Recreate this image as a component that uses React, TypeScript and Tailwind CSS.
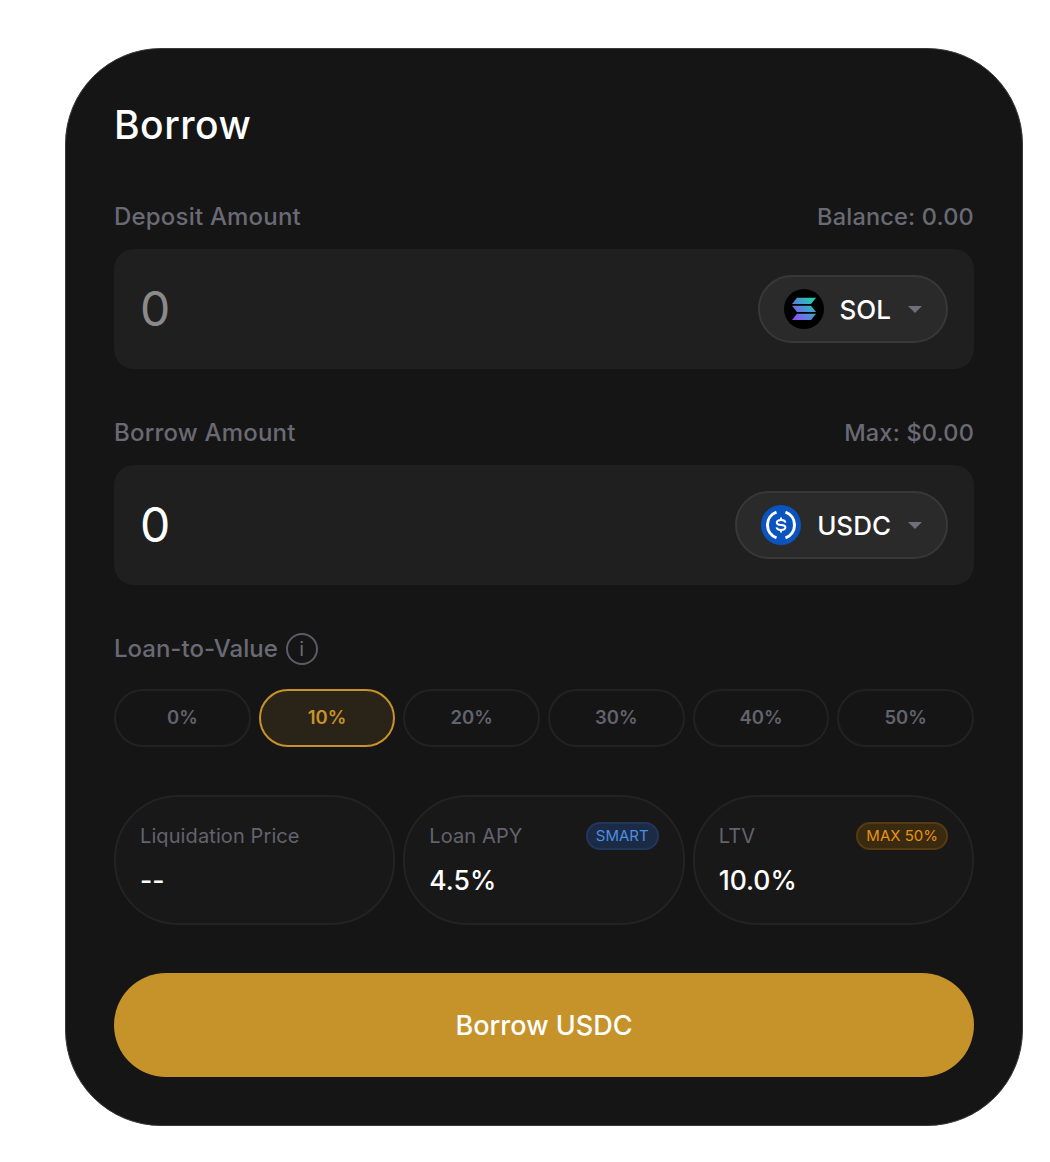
const ltvOptions = ["0%", "10%", "20%", "30%", "40%", "50%"];

function SolanaLogo() {
  return (
    <svg viewBox="0 0 40 40" className="w-10 h-10 shrink-0">
      <defs>
        <linearGradient id="sol-a" x1="8" y1="31" x2="32" y2="9" gradientUnits="userSpaceOnUse">
          <stop offset="0" stopColor="#9a45ff" />
          <stop offset="0.5" stopColor="#4c8fd6" />
          <stop offset="1" stopColor="#19e0a0" />
        </linearGradient>
      </defs>
      <circle cx="20" cy="20" r="20" fill="#000" />
      <path d="M13 8.7H32L27 15H8Z" fill="url(#sol-a)" />
      <path d="M8 16.7H27L32 23H13Z" fill="url(#sol-a)" />
      <path d="M13 24.7H32L27 31H8Z" fill="url(#sol-a)" />
    </svg>
  );
}

function UsdcLogo() {
  return (
    <svg viewBox="0 0 40 40" className="w-10 h-10 shrink-0">
      <circle cx="20" cy="20" r="20" fill="#0b53bf" />
      <path d="M15.5 7.2A13.6 13.6 0 0 0 15.5 32.8" fill="none" stroke="#fff" strokeWidth="3" />
      <path d="M24.5 7.2A13.6 13.6 0 0 1 24.5 32.8" fill="none" stroke="#fff" strokeWidth="3" />
      <path
        d="M24.4 17.6C24.2 15.9 22.4 15 20 15C17.4 15 15.8 16 15.8 17.8C15.8 21.6 24.4 18.6 24.4 22.3C24.4 24 22.6 25 20 25C17.5 25 15.8 24.1 15.6 22.4"
        fill="none"
        stroke="#fff"
        strokeWidth="2"
      />
      <path d="M20 12.4V15M20 25V27.6" stroke="#fff" strokeWidth="2" />
    </svg>
  );
}

function AmountField({
  label,
  hint,
  value,
  valueClass,
  token,
  logo,
}: {
  label: string;
  hint: string;
  value: string;
  valueClass: string;
  token: string;
  logo: React.ReactNode;
}) {
  return (
    <div>
      <div className="flex items-center justify-between h-8 mb-[16px] text-[24px] text-[#6a6a74] font-medium tracking-[0.2px]">
        <span>{label}</span>
        <span className="text-[23.5px]">{hint}</span>
      </div>
      <div className="h-[120px] rounded-[20px] bg-[#1f1f1f] flex items-center justify-between pl-[26px] pr-[26px]">
        <span className={`text-[48px] leading-none ${valueClass}`}>{value}</span>
        <div className="h-[68px] rounded-full bg-[#2a2a2a] border-2 border-[#383838] flex items-center pl-[24px] pr-[24px]">
          {logo}
          <span className="ml-[16px] text-[26px] font-medium text-white">{token}</span>
          <span className="ml-[17px] w-0 h-0 border-x-[7px] border-x-transparent border-t-[7px] border-t-[#6f6f79]" />
        </div>
      </div>
    </div>
  );
}

function Stat({
  label,
  value,
  badge,
}: {
  label: string;
  value: string;
  badge?: React.ReactNode;
}) {
  return (
    <div className="h-[130px] rounded-[64px] bg-[#181818] border-2 border-[#232323] pl-[24px] pr-[24px] pt-[25px]">
      <div className="flex items-center justify-between h-[28px]">
        <span className="text-[20px] tracking-[0.1px] text-[#63636d]">{label}</span>
        {badge}
      </div>
      <div className="mt-[14px] text-[26.5px] leading-[32px] font-medium text-white">{value}</div>
    </div>
  );
}

export default function App() {
  return (
    <div className="w-[1050px] h-[1162px] bg-white pl-[65px] pt-[48px] font-['Inter',sans-serif]">
      <div className="w-[958px] h-[1078px] rounded-[96px] bg-[#151515] border border-[#3a3a3a] px-[48px] pt-[48px]">
        <h1 className="text-[39px] leading-[56px] font-medium text-white tracking-[0.5px]">Borrow</h1>

        <div className="mt-[48px]">
          <AmountField
            label="Deposit Amount"
            hint="Balance: 0.00"
            value="0"
            valueClass="text-[#8a8a8a]"
            token="SOL"
            logo={<SolanaLogo />}
          />
        </div>

        <div className="mt-[48px]">
          <AmountField
            label="Borrow Amount"
            hint="Max: $0.00"
            value="0"
            valueClass="text-white"
            token="USDC"
            logo={<UsdcLogo />}
          />
        </div>

        {/* LTV selector */}
        <div className="mt-[48px] flex items-center gap-[8px] h-[32px] text-[24px] text-[#6a6a74] font-medium">
          <span>Loan-to-Value</span>
          <span className="w-[32px] h-[32px] rounded-full border-2 border-[#5c5c66] flex items-center justify-center text-[20px] font-normal">
            i
          </span>
        </div>
        <div className="mt-[24px] grid grid-cols-6 gap-[8px]">
          {ltvOptions.map((opt) => (
            <div
              key={opt}
              className={
                opt === "10%"
                  ? "h-[58px] rounded-full border-2 border-[#c8922a] bg-[#2a2418] text-[#c8922a] flex items-center justify-center text-[18.5px] font-semibold"
                  : "h-[58px] rounded-full border-2 border-[#222222] text-[#63636d] flex items-center justify-center text-[18.5px] font-semibold"
              }
            >
              {opt}
            </div>
          ))}
        </div>

        <div className="mt-[48px] grid grid-cols-3 gap-[8px]">
          <Stat label="Liquidation Price" value="--" />
          <Stat
            label="Loan APY"
            value="4.5%"
            badge={
              <span className="h-[28px] rounded-full bg-[#1b2a45] border-2 border-[#22365c] px-[8px] flex items-center text-[15px] text-[#4d8fe0]">
                SMART
              </span>
            }
          />
          <Stat
            label="LTV"
            value="10.0%"
            badge={
              <span className="h-[28px] rounded-full bg-[#3a2a10] border-2 border-[#553a12] px-[8px] flex items-center text-[15px] text-[#e8930f]">
                MAX 50%
              </span>
            }
          />
        </div>

        <button className="mt-[48px] w-full h-[104px] pt-[2px] rounded-full bg-[#c6922a] text-white text-[27px] font-medium">
          Borrow USDC
        </button>
      </div>
    </div>
  );
}
